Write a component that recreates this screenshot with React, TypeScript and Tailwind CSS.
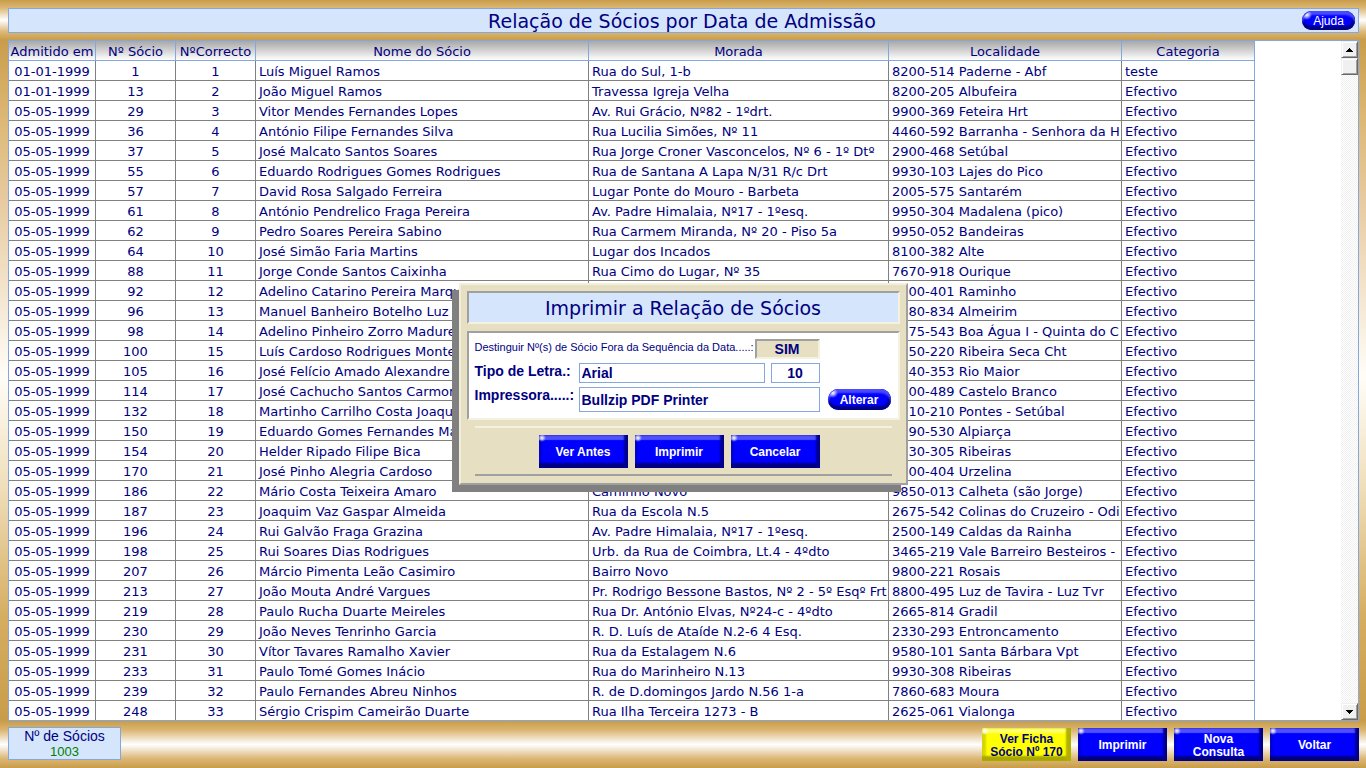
import { useState } from "react";
import type { ReactNode } from "react";

type Member = [date: string, number: string, name: string, address: string, place: string, category?: string];

const members: Member[] = [
  ["01-01-1999", "1", "Luís Miguel Ramos", "Rua do Sul, 1-b", "8200-514 Paderne - Abf", "teste"],
  ["01-01-1999", "13", "João Miguel Ramos", "Travessa Igreja Velha", "8200-205 Albufeira"],
  ["05-05-1999", "29", "Vitor Mendes Fernandes Lopes", "Av. Rui Grácio, Nº82 - 1ºdrt.", "9900-369 Feteira Hrt"],
  ["05-05-1999", "36", "António Filipe Fernandes Silva", "Rua Lucilia Simões, Nº 11", "4460-592 Barranha - Senhora da Ho"],
  ["05-05-1999", "37", "José Malcato Santos Soares", "Rua Jorge Croner Vasconcelos, Nº 6 - 1º Dtº", "2900-468 Setúbal"],
  ["05-05-1999", "55", "Eduardo Rodrigues Gomes Rodrigues", "Rua de Santana A Lapa N/31 R/c Drt", "9930-103 Lajes do Pico"],
  ["05-05-1999", "57", "David Rosa Salgado Ferreira", "Lugar Ponte do Mouro - Barbeta", "2005-575 Santarém"],
  ["05-05-1999", "61", "António Pendrelico Fraga Pereira", "Av. Padre Himalaia, Nº17 - 1ºesq.", "9950-304 Madalena (pico)"],
  ["05-05-1999", "62", "Pedro Soares Pereira Sabino", "Rua Carmem Miranda, Nº 20 - Piso 5a", "9950-052 Bandeiras"],
  ["05-05-1999", "64", "José Simão Faria Martins", "Lugar dos Incados", "8100-382 Alte"],
  ["05-05-1999", "88", "Jorge Conde Santos Caixinha", "Rua Cimo do Lugar, Nº 35", "7670-918 Ourique"],
  ["05-05-1999", "92", "Adelino Catarino Pereira Marques", "", "9700-401 Raminho"],
  ["05-05-1999", "96", "Manuel Banheiro Botelho Luz", "", "2080-834 Almeirim"],
  ["05-05-1999", "98", "Adelino Pinheiro Zorro Madureira", "", "2975-543 Boa Água I - Quinta do Co"],
  ["05-05-1999", "100", "Luís Cardoso Rodrigues Monteiro", "", "9850-220 Ribeira Seca Cht"],
  ["05-05-1999", "105", "José Felício Amado Alexandre", "", "2040-353 Rio Maior"],
  ["05-05-1999", "114", "José Cachucho Santos Carmona", "", "6000-489 Castelo Branco"],
  ["05-05-1999", "132", "Martinho Carrilho Costa Joaquim", "", "2910-210 Pontes - Setúbal"],
  ["05-05-1999", "150", "Eduardo Gomes Fernandes Marques", "", "2090-530 Alpiarça"],
  ["05-05-1999", "154", "Helder Ripado Filipe Bica", "", "9930-305 Ribeiras"],
  ["05-05-1999", "170", "José Pinho Alegria Cardoso", "", "9800-404 Urzelina"],
  ["05-05-1999", "186", "Mário Costa Teixeira Amaro", "Caminho Novo", "9850-013 Calheta (são Jorge)"],
  ["05-05-1999", "187", "Joaquim Vaz Gaspar Almeida", "Rua da Escola N.5", "2675-542 Colinas do Cruzeiro - Odiv"],
  ["05-05-1999", "196", "Rui Galvão Fraga Grazina", "Av. Padre Himalaia, Nº17 - 1ºesq.", "2500-149 Caldas da Rainha"],
  ["05-05-1999", "198", "Rui Soares Dias Rodrigues", "Urb. da Rua de Coimbra, Lt.4 - 4ºdto", "3465-219 Vale Barreiro Besteiros - B"],
  ["05-05-1999", "207", "Márcio Pimenta Leão Casimiro", "Bairro Novo", "9800-221 Rosais"],
  ["05-05-1999", "213", "João Mouta André Vargues", "Pr. Rodrigo Bessone Bastos, Nº 2 - 5º Esqº Frt", "8800-495 Luz de Tavira - Luz Tvr"],
  ["05-05-1999", "219", "Paulo Rucha Duarte Meireles", "Rua Dr. António Elvas, Nº24-c - 4ºdto", "2665-814 Gradil"],
  ["05-05-1999", "230", "João Neves Tenrinho Garcia", "R. D. Luís de Ataíde N.2-6 4 Esq.", "2330-293 Entroncamento"],
  ["05-05-1999", "231", "Vítor Tavares Ramalho Xavier", "Rua da Estalagem N.6", "9580-101 Santa Bárbara Vpt"],
  ["05-05-1999", "233", "Paulo Tomé Gomes Inácio", "Rua do Marinheiro N.13", "9930-308 Ribeiras"],
  ["05-05-1999", "239", "Paulo Fernandes Abreu Ninhos", "R. de D.domingos Jardo N.56 1-a", "7860-683 Moura"],
  ["05-05-1999", "248", "Sérgio Crispim Cameirão Duarte", "Rua Ilha Terceira 1273 - B", "2625-061 Vialonga"],
];

const headings = ["Admitido em", "Nº Sócio", "NºCorrecto", "Nome do Sócio", "Morada", "Localidade", "Categoria"];

const band =
  "bg-[linear-gradient(to_bottom,#c89c49_0%,#dcb774_20%,#ecd9b8_34%,#ffffff_50%,#ecd9b8_66%,#dcb774_80%,#c89c49_100%)]";

function BevelButton({ children, yellow = false }: { children: ReactNode; yellow?: boolean }) {
  const tone = yellow
    ? "bg-[#ffff00] text-[#000080] shadow-[inset_-5px_0_2px_#b0b000,inset_0_-5px_2px_#a8a800,inset_0_5px_2px_#ffff70,inset_4px_0_2px_#d8d800]"
    : "bg-[#0000ff] text-white shadow-[inset_-4px_0_2px_#000090,inset_0_-5px_2px_#000080,inset_0_5px_1px_#5050ff,inset_3px_0_2px_#0000d8]";
  return (
    <button
      type="button"
      className={`relative flex h-[33px] w-[89px] items-center justify-center pt-0.5 text-center font-['Liberation_Sans',sans-serif] text-[12px] leading-[13px] font-bold whitespace-nowrap ${tone}`}
    >
      <span className="absolute top-0 left-0 size-2 bg-[radial-gradient(circle_at_3px_3px,#ffffff_0px,#ffffff00_4px)]" />
      <span>{children}</span>
    </button>
  );
}

function PillButton({ children, className }: { children: ReactNode; className: string }) {
  return (
    <button
      type="button"
      className={`relative flex items-center justify-center rounded-full bg-[#0000ff] font-['Liberation_Sans',sans-serif] text-[12px] text-white shadow-[inset_0_4px_2px_#4a4aff,inset_-3px_0_2px_#000090,inset_0_-4px_2px_#000080] ${className}`}
    >
      <span className="absolute top-0 left-0 size-3 rounded-tl-full bg-[radial-gradient(circle_at_5px_4px,#ffffff_0px,#ffffff00_5px)]" />
      <span>{children}</span>
    </button>
  );
}

function ScrollArrow({ up = false }: { up?: boolean }) {
  return (
    <button
      type="button"
      aria-label={up ? "Subir" : "Descer"}
      className="flex h-[17px] w-full shrink-0 items-center justify-center border border-t-[#f0f0f0] border-r-[#696969] border-b-[#696969] border-l-[#f0f0f0] bg-[#f0f0f0] shadow-[inset_1px_1px_0_#ffffff,inset_-1px_-1px_0_#a0a0a0]"
    >
      <svg width="7" height="4" viewBox="0 0 7 4" shapeRendering="crispEdges">
        <path d={up ? "M3 0h1v1h1v1h1v1h1v1H0V3h1V2h1V1h1z" : "M0 0h7v1H6v1H5v1H4v1H3V3H2V2H1V1H0z"} fill="#000" />
      </svg>
    </button>
  );
}

function PrintDialog() {
  const [font, setFont] = useState("Arial");
  const [size, setSize] = useState("10");
  const [printer, setPrinter] = useState("Bullzip PDF Printer");
  const field = "border border-[#84a7de] bg-white font-bold text-[14px] text-[#000080] outline-none";
  return (
    <div
      role="dialog"
      aria-labelledby="dialog-title"
      className="w-[449px] border-2 border-t-[#f1eedb] border-r-[#a0a0a0] border-b-[#a0a0a0] border-l-[#f1eedb] bg-[#e6dfc1] px-1.5 pt-1.5 pb-[7px] font-['Liberation_Sans',sans-serif] text-[#000080] shadow-[-7px_7px_0_#808080]"
    >
      <h2
        id="dialog-title"
        className="h-[33px] border-2 border-t-[#a0a0a0] border-r-[#f4f1e0] border-b-[#f4f1e0] border-l-[#a0a0a0] bg-[#d5e5fb] text-center font-['DejaVu_Sans',sans-serif] text-[19px] leading-[30px]"
      >
        Imprimir a Relação de Sócios
      </h2>
      <div className="mt-[7px] h-[89px] border-2 border-t-[#a0a0a0] border-r-[#f4f1e0] border-b-[#f4f1e0] border-l-[#a0a0a0] bg-white pt-1.5 pl-1.5">
        <div className="flex h-5">
          <span id="distinguish" className="w-[280px] text-[11px] leading-4 whitespace-nowrap">
            Destinguir Nº(s) de Sócio Fora da Sequência da Data.....:
          </span>
          <button
            type="button"
            aria-labelledby="distinguish"
            className="h-5 w-[65px] border-2 border-t-[#a0a0a0] border-r-[#f4f1e0] border-b-[#f4f1e0] border-l-[#a0a0a0] bg-[#e6dfc1] text-[14px] leading-4 font-bold"
          >
            SIM
          </button>
        </div>
        <div className="mt-1 flex h-5">
          <label htmlFor="font" className="w-26 text-[14px] leading-4 font-bold whitespace-nowrap">
            Tipo de Letra.:
          </label>
          <input id="font" value={font} onChange={(e) => setFont(e.target.value)} className={`w-[186px] px-0.5 ${field}`} />
          <input
            aria-label="Tamanho"
            value={size}
            onChange={(e) => setSize(e.target.value)}
            className={`ml-1.5 w-[49px] text-center ${field}`}
          />
        </div>
        <div className="mt-1 flex h-[25px] items-center">
          <label htmlFor="printer" className="w-26 self-start text-[14px] leading-4 font-bold whitespace-nowrap">
            Impressora.....:
          </label>
          <input
            id="printer"
            value={printer}
            onChange={(e) => setPrinter(e.target.value)}
            className={`h-full w-[241px] px-0.5 ${field}`}
          />
          <PillButton className="ml-2 h-[21px] w-[63px] font-bold">Alterar</PillButton>
        </div>
      </div>
      <div className="mx-2 mt-1.5 flex justify-center gap-[7px] border-t-2 border-b-2 border-t-[#f4f1e0] border-b-[#a0a0a0] pt-[7px] pr-2 pb-1.5">
        <BevelButton>Ver Antes</BevelButton>
        <BevelButton>Imprimir</BevelButton>
        <BevelButton>Cancelar</BevelButton>
      </div>
    </div>
  );
}

export default function App() {
  const cell = "h-5 border-r border-b border-[#808080] overflow-hidden whitespace-nowrap p-0 pt-0.5 leading-[17px]";
  return (
    <div className="relative flex h-screen flex-col overflow-hidden bg-[linear-gradient(to_bottom,#c89c49_5%,#dcb774_15%,#e6c89c_25%,#fffdf8_49%,#efddb8_64%,#d6ae62_80%,#c89c49_94%)] font-['DejaVu_Sans',sans-serif] text-[13px] text-[#000080]">
      <header className={`h-10 shrink-0 pt-2 pr-[7px] pl-2 ${band}`}>
        <div className="grid h-[25px] grid-cols-[1fr_auto_1fr] items-center border border-[#84a7de] bg-[#d5e5fb] pr-[3px]">
          <h1 className="col-start-2 pt-0.5 text-[19px] leading-[21px]">Relação de Sócios por Data de Admissão</h1>
          <PillButton className="h-[19px] w-[53px] justify-self-end">Ajuda</PillButton>
        </div>
      </header>

      <main className="mr-[7px] ml-2 flex min-h-0 flex-1 border border-[#84a7de] bg-white">
        <div className="min-w-0 flex-1 overflow-hidden">
          <table className="w-[1246px] table-fixed border-separate border-spacing-0">
            <colgroup>
              <col className="w-[87px]" />
              <col className="w-20" />
              <col className="w-20" />
              <col className="w-[333px]" />
              <col className="w-[300px]" />
              <col className="w-[233px]" />
              <col className="w-[133px]" />
            </colgroup>
            <thead>
              <tr>
                {headings.map((h) => (
                  <th
                    key={h}
                    scope="col"
                    className="h-5 border-r border-b border-[#84a7de] bg-linear-to-b from-[#a8a8a8] to-white p-0 pt-0.5 text-center leading-[17px] font-normal whitespace-nowrap"
                  >
                    {h}
                  </th>
                ))}
              </tr>
            </thead>
            <tbody>
              {members.map(([date, number, name, address, place, category = "Efectivo"], i) => (
                <tr key={number}>
                  <td className={`${cell} text-center`}>{date}</td>
                  <td className={`${cell} text-center`}>{number}</td>
                  <td className={`${cell} text-center`}>{i + 1}</td>
                  <td className={`${cell} pl-[3px]`}>{name}</td>
                  <td className={`${cell} pl-[3px]`}>{address}</td>
                  <td className={cell}>
                    <div className="mr-0.5 ml-[3px] overflow-hidden">{place}</div>
                  </td>
                  <td className={`${cell} border-r-[#84a7de] pl-[3px]`}>{category}</td>
                </tr>
              ))}
            </tbody>
          </table>
        </div>
        <div className="flex w-[17px] shrink-0 flex-col bg-[repeating-conic-gradient(#ffffff_0_25%,#f0f0f0_0_50%)] bg-size-[2px_2px]">
          <ScrollArrow up />
          <div className="h-[17px] border border-t-[#f0f0f0] border-r-[#696969] border-b-[#696969] border-l-[#f0f0f0] bg-[#f0f0f0] shadow-[inset_1px_1px_0_#ffffff,inset_-1px_-1px_0_#a0a0a0]" />
          <div className="flex-1" />
          <ScrollArrow />
        </div>
      </main>

      <footer className={`flex h-[47px] shrink-0 items-start justify-between pt-1.5 pr-[7px] pl-2 ${band}`}>
        <div className="h-[33px] w-[113px] border border-[#84a7de] bg-[#d5e5fb] pt-px text-center font-['Liberation_Sans',sans-serif] text-[14px] leading-[15px]">
          <div>Nº de Sócios</div>
          <div className="text-[13px] text-[#008000]">1003</div>
        </div>
        <div className="flex gap-[7px] pt-px">
          <BevelButton yellow>
            Ver Ficha
            <br />
            Sócio Nº 170
          </BevelButton>
          <BevelButton>Imprimir</BevelButton>
          <BevelButton>
            Nova
            <br />
            Consulta
          </BevelButton>
          <BevelButton>Voltar</BevelButton>
        </div>
      </footer>

      <div className="absolute inset-0 flex items-center justify-center">
        <PrintDialog />
      </div>
    </div>
  );
}
